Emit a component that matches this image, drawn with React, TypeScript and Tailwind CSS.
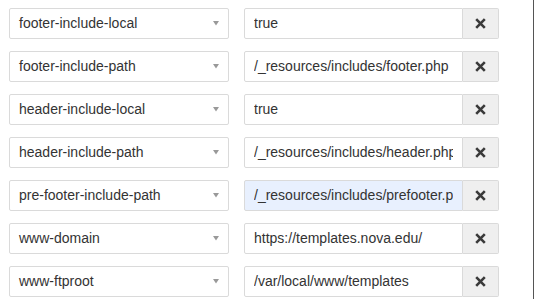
import React from 'react';

const rows = [
  { key: 'footer-include-local', value: 'true' },
  { key: 'footer-include-path', value: '/_resources/includes/footer.php' },
  { key: 'header-include-local', value: 'true' },
  { key: 'header-include-path', value: '/_resources/includes/header.php' },
  { key: 'pre-footer-include-path', value: '/_resources/includes/prefooter.php', active: true },
  { key: 'www-domain', value: 'https://templates.nova.edu/' },
  { key: 'www-ftproot', value: '/var/local/www/templates' },
];

const XIcon = () => (
  <svg width="11" height="11" viewBox="0 0 11 11" aria-hidden="true">
    <path d="M1.2 1.2 L9.8 9.8 M9.8 1.2 L1.2 9.8" stroke="#3a3a3a" strokeWidth="2.6" strokeLinecap="butt" />
  </svg>
);

const App: React.FC = () => {
  return (
    <div
      className="relative h-[299px] w-[534px] overflow-hidden bg-white border-r border-[#555]"
      style={{ fontFamily: '"Liberation Sans", Arial, sans-serif' }}
    >
      <div className="flex flex-col gap-[12px] pl-[9px] pt-[8px]">
        {rows.map((row) => (
          <div key={row.key} className="flex h-[31px] items-stretch">
            <div className="flex w-[220px] items-center justify-between rounded-[2px] border border-[#dadada] bg-white pl-[9px] pr-[9px] text-[14px] text-[#333]">
              <span>{row.key}</span>
              <svg width="6" height="5" viewBox="0 0 6 5" aria-hidden="true">
                <path d="M0 0 L6 0 L3 4.5 Z" fill="#999" />
              </svg>
            </div>
            <div className="ml-[15px] flex w-[255px]">
              <div
                className={
                  'flex w-[219px] items-center rounded-l-[2px] border border-[#dadada] pl-[9px] pr-[9px] text-[14px] text-[#333] ' +
                  (row.active ? 'bg-[#e8f0fe]' : 'bg-white')
                }
              >
                <span className="block min-w-0 flex-1 overflow-hidden whitespace-nowrap">{row.value}</span>
              </div>
              <div className="flex w-[36px] items-center justify-center rounded-r-[2px] border border-l-0 border-[#dadada] bg-[#efefef]">
                <XIcon />
              </div>
            </div>
          </div>
        ))}
      </div>
    </div>
  );
};

export default App;
